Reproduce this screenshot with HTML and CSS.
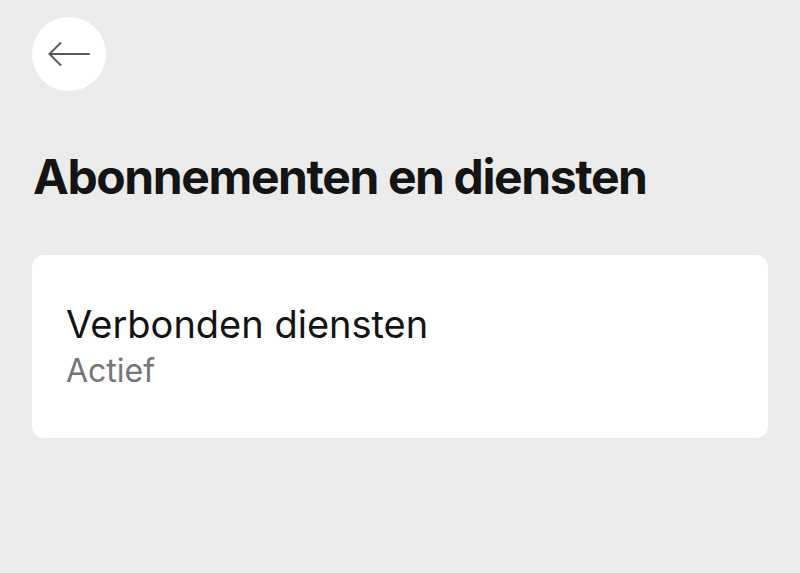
FILE: index.html
```html
<!DOCTYPE html>
<html lang="nl">
<head>
<meta charset="utf-8">
<link rel="stylesheet" href="styles.css">
</head>
<body>
<div class="page">
  <button class="back" aria-label="Terug">
    <svg width="44" height="28" viewBox="0 0 44 28" fill="none" stroke="#5a5a5a" stroke-width="2" stroke-linecap="round" stroke-linejoin="round">
      <path d="M2.5 14 H42"/>
      <path d="M13.5 3 L2.5 14 L13.5 25"/>
    </svg>
  </button>
  <h1 class="title">Abonnementen en diensten</h1>
  <div class="card">
    <div class="card-title">Verbonden diensten</div>
    <div class="card-sub">Actief</div>
  </div>
</div>
</body>
</html>
```
FILE: styles.css
```css
html, body {
  margin: 0;
  padding: 0;
  background: #ebebeb;
  font-family: Inter, "Liberation Sans", sans-serif;
}
.page {
  padding: 17px 32px 0 32px;
  display: flex;
  flex-direction: column;
}
.back {
  width: 74px;
  height: 74px;
  border-radius: 50%;
  background: #ffffff;
  border: none;
  padding: 0;
  display: flex;
  align-items: center;
  justify-content: center;
}
.title {
  margin: 57px 0 0 1px;
  font-size: 48px;
  line-height: 58px;
  font-weight: 700;
  color: #141414;
  letter-spacing: -1.4px;
}
.card {
  margin-top: 49px;
  background: #ffffff;
  border-radius: 12px;
  height: 183px;
  padding: 46px 34px 0 34px;
  box-sizing: border-box;
  display: flex;
  flex-direction: column;
}
.card-title {
  font-size: 38px;
  line-height: 46px;
  color: #141414;
}
.card-sub {
  margin-top: 4px;
  font-size: 32px;
  line-height: 40px;
  color: #767676;
}
```
